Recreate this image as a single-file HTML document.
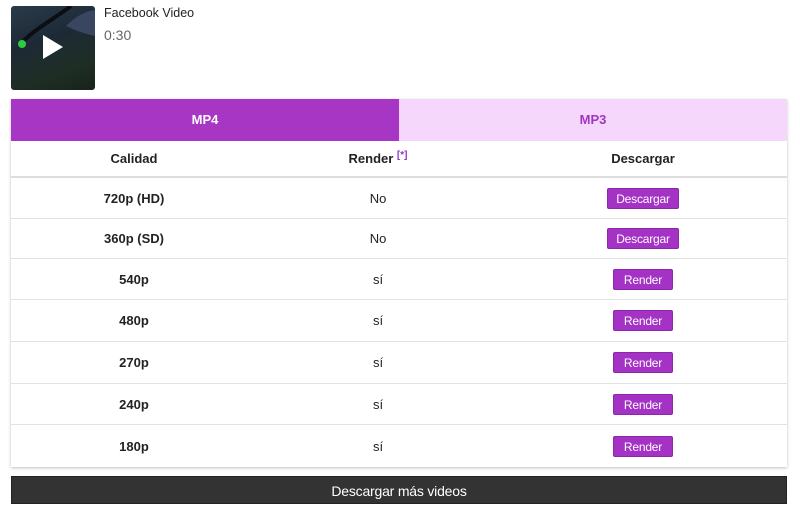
<!DOCTYPE html>
<html><head><style>
*{margin:0;padding:0;box-sizing:border-box}
body{width:800px;height:509px;background:#fff;font-family:"Liberation Sans",Arial,sans-serif;position:relative;overflow:hidden;color:#222}
.thumb{position:absolute;left:11px;top:6px;width:84px;height:84px;border-radius:3px;background:linear-gradient(160deg,#2a3a4a 0%,#1d2a36 40%,#1e2e24 75%,#18221a 100%);overflow:hidden}
.title{position:absolute;left:104px;top:6px;font-size:12.5px;color:#222}
.dur{position:absolute;left:104px;top:27px;font-size:14px;color:#666}
.card{position:absolute;left:11px;top:99px;width:776px;height:368px;box-shadow:0 1px 3px rgba(0,0,0,.25);background:#fff}
.tab{position:absolute;top:0;height:42px;line-height:42px;text-align:center;font-size:13px;font-weight:bold}
.row{position:absolute;left:0;width:776px;border-bottom:1px solid #e2e2e2;font-size:13px}
.row div{position:absolute;top:0;height:100%;display:flex;align-items:center;justify-content:center}
.c1{left:0;width:246px;font-weight:bold}
.c2{left:246px;width:242px}
.c3{left:488px;width:288px}
.btn{background:#a332c5;color:#fff;font-size:12px;height:21px;line-height:20px;border-radius:2px;padding:0 8px;border:1px solid #8d27aa;letter-spacing:-0.2px}
.r{padding:0 10px}
.bar{position:absolute;left:11px;top:476px;width:776px;height:28px;background:#333;color:#fff;font-size:14px;text-align:center;line-height:28px;border:1px solid #222;letter-spacing:-0.2px}
</style></head><body>
<div class="thumb">
<svg width="84" height="84" viewBox="0 0 84 84"><path d="M8 40 C20 25,40 15,60 0" stroke="#0b0f14" stroke-width="4" fill="none"/><path d="M55 20 C65 10,75 5,84 4 L84 30 C75 28,65 25,55 20Z" fill="#3a4660"/><circle cx="11" cy="38" r="4" fill="#2ecc40"/><polygon points="32,29 32,53 52,41" fill="#fff"/></svg>
</div>
<div class="title">Facebook Video</div>
<div class="dur">0:30</div>
<div class="card">
<div class="tab" style="left:0;width:388px;background:#a636c3;color:#fff">MP4</div>
<div class="tab" style="left:388px;width:388px;background:#f6d7fc;color:#a335c4">MP3</div>
<div class="row" style="top:42px;height:37px;border-bottom:2px solid #ddd;font-weight:bold"><div class="c1">Calidad</div><div class="c2" style="font-weight:bold">Render&nbsp;<sup style="color:#8a3bc4;font-size:10px;margin-top:-6px">[*]</sup></div><div class="c3" style="font-weight:bold">Descargar</div></div>
<div class="row" style="top:79px;height:41px"><div class="c1">720p (HD)</div><div class="c2">No</div><div class="c3"><span class="btn">Descargar</span></div></div>
<div class="row" style="top:120px;height:40px"><div class="c1">360p (SD)</div><div class="c2">No</div><div class="c3"><span class="btn">Descargar</span></div></div>
<div class="row" style="top:160px;height:41px"><div class="c1">540p</div><div class="c2">sí</div><div class="c3"><span class="btn r">Render</span></div></div>
<div class="row" style="top:201px;height:42px"><div class="c1">480p</div><div class="c2">sí</div><div class="c3"><span class="btn r">Render</span></div></div>
<div class="row" style="top:243px;height:42px"><div class="c1">270p</div><div class="c2">sí</div><div class="c3"><span class="btn r">Render</span></div></div>
<div class="row" style="top:285px;height:41px"><div class="c1">240p</div><div class="c2">sí</div><div class="c3"><span class="btn r">Render</span></div></div>
<div class="row" style="top:326px;height:42px;border-bottom:none"><div class="c1">180p</div><div class="c2">sí</div><div class="c3"><span class="btn r">Render</span></div></div>
</div>
<div class="bar">Descargar más videos</div>
</body></html>
